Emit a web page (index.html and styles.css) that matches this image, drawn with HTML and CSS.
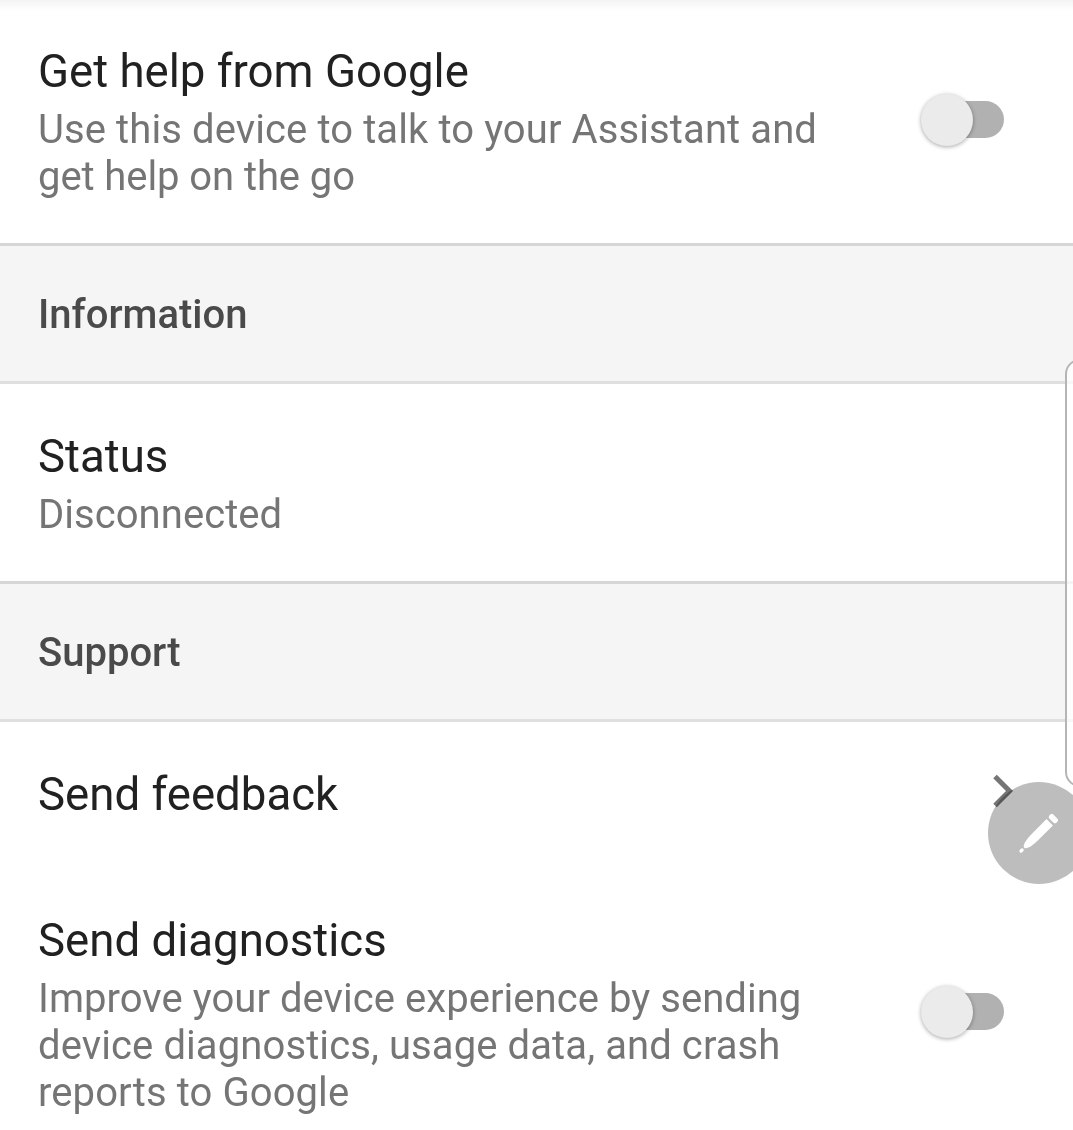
FILE: index.html
```html
<!DOCTYPE html>
<html lang="en">
<head>
<meta charset="utf-8">
<title>Assistant device settings</title>
<link rel="stylesheet" href="styles.css">
</head>
<body>
<main class="settings">
  <section class="row row-help">
    <div class="copy">
      <h2 class="title">Get help from Google</h2>
      <p class="summary"><span class="wide">Use this device to talk to your Assistant and</span><br><span class="tight">get help on the go</span></p>
    </div>
    <div class="switch"><span class="thumb"></span></div>
  </section>
  <h3 class="category">Information</h3>
  <section class="row row-status">
    <div class="copy">
      <h2 class="title">Status</h2>
      <p class="summary">Disconnected</p>
    </div>
  </section>
  <h3 class="category">Support</h3>
  <section class="row row-feedback">
    <h2 class="title">Send feedback</h2>
    <svg class="chevron" width="24" height="36" viewBox="0 0 24 36"><path d="M3 3.500 17.500 18 3 32.500" fill="none" stroke="#757575" stroke-width="5"/></svg>
  </section>
  <section class="row row-diagnostics">
    <div class="copy">
      <h2 class="title">Send diagnostics</h2>
      <p class="summary">Improve your device experience by sending<br><span class="wide">device diagnostics, usage data, and crash<br>reports to Google</span></p>
    </div>
    <div class="switch"><span class="thumb"></span></div>
  </section>
</main>
<div class="edge-panel"></div>
<div class="pen">
  <svg width="102" height="102" viewBox="0 0 102 102"><g transform="translate(32 70) rotate(-45)" fill="#fff"><ellipse cx="2.200" cy="0" rx="2.500" ry="1.800"/><path d="M6 0C6-3 14-4.500 20-4.500H42V4.500H20C14 4.500 6 3 6 0Z"/><rect x="44.500" y="-5" width="5.500" height="10" rx="2"/></g></svg>
</div>
</body>
</html>
```
FILE: styles.css
```css
* { box-sizing: border-box; }
body { margin: 0; width: 1073px; height: 1130px; overflow: hidden; position: relative; background: #fff; font-family: Roboto, sans-serif; }
.settings { display: flex; flex-direction: column; height: 1130px; background: linear-gradient(#f3f3f3, #fff 10px); }
.row { display: flex; justify-content: space-between; padding-left: 38px; flex: none; }
.title { margin: 0; font-size: 45.6px; line-height: 54px; font-weight: 400; color: #212121; white-space: nowrap; }
.summary { margin: 7px 0 0; font-size: 40px; line-height: 47px; color: #757575; white-space: nowrap; letter-spacing: .05px; }
.wide { letter-spacing: .1px; }
.tight { letter-spacing: -.08px; }
.row-help { height: 243px; padding-top: 45px; }
.row-status { height: 197px; padding-top: 46px; }
.row-feedback { height: 146px; padding-top: 46px; }
.row-diagnostics { height: 262px; padding-top: 46px; }
.category { margin: 0; height: 141px; flex: none; padding-left: 38px; border-top: 3px solid #d6d6d6; border-bottom: 3px solid #dfdfdf; background: #f5f5f5; font-size: 40px; line-height: 138px; font-weight: 500; color: #4a4a4a; }
.switch { position: relative; width: 82px; height: 37px; margin: 56px 69px 0 0; border-radius: 19px; background: #b1b1b1; }
.row-diagnostics .switch { margin-top: 79px; }
.thumb { position: absolute; left: -1px; top: -7px; width: 52px; height: 52px; border-radius: 50%; background: #ebebeb; box-shadow: 0 1px 4px rgba(0,0,0,.35); }
.chevron { margin: 5px 57px 0 0; }
.edge-panel { position: absolute; left: 1065px; top: 359px; width: 30px; height: 428px; border: 2px solid #b5b5b5; border-radius: 16px; background: rgba(255,255,255,.75); }
.pen { position: absolute; left: 988px; top: 782px; width: 102px; height: 102px; border-radius: 50%; background: #bdbdbd; mix-blend-mode: multiply; }
```
